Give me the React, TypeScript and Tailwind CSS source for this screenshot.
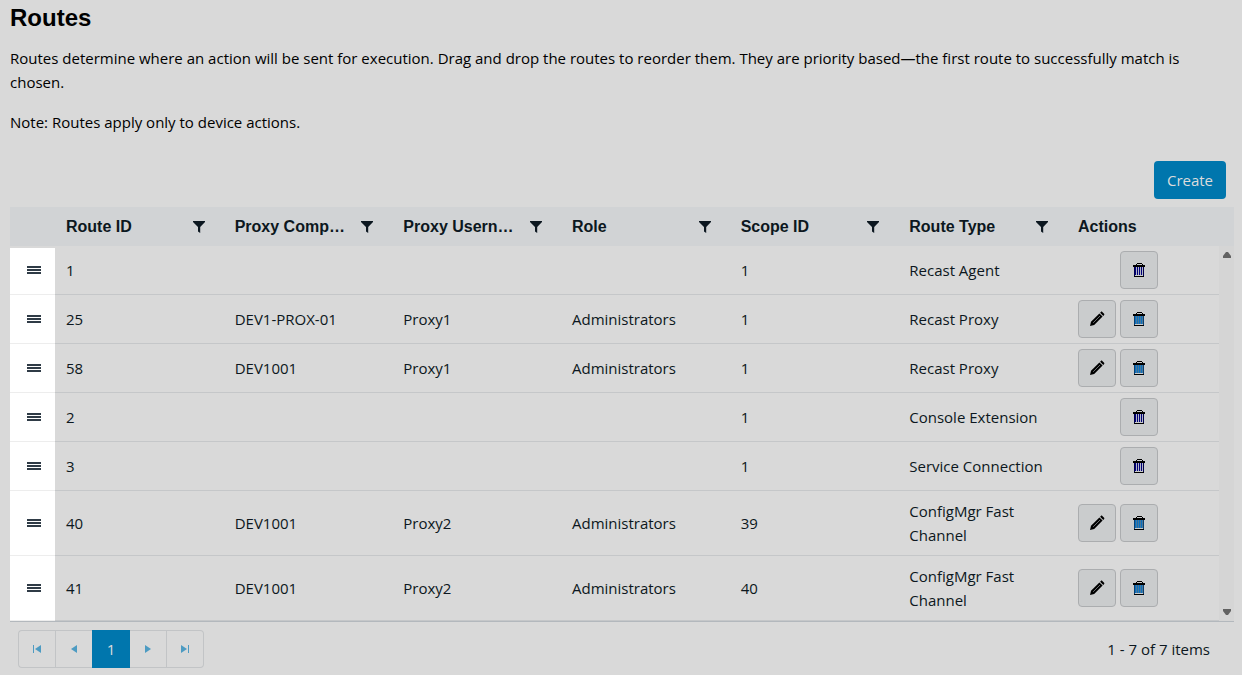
import clsx from "clsx";

type Route = {
  id: number;
  computer?: string;
  username?: string;
  role?: string;
  scope: number;
  type: string;
  editable?: boolean;
};

const ROUTES: Route[] = [
  { id: 1, scope: 1, type: "Recast Agent" },
  { id: 25, computer: "DEV1-PROX-01", username: "Proxy1", role: "Administrators", scope: 1, type: "Recast Proxy", editable: true },
  { id: 58, computer: "DEV1001", username: "Proxy1", role: "Administrators", scope: 1, type: "Recast Proxy", editable: true },
  { id: 2, scope: 1, type: "Console Extension" },
  { id: 3, scope: 1, type: "Service Connection" },
  { id: 40, computer: "DEV1001", username: "Proxy2", role: "Administrators", scope: 39, type: "ConfigMgr Fast Channel", editable: true },
  { id: 41, computer: "DEV1001", username: "Proxy2", role: "Administrators", scope: 40, type: "ConfigMgr Fast Channel", editable: true },
];

const COLUMNS = ["Route ID", "Proxy Comp…", "Proxy Usern…", "Role", "Scope ID", "Route Type"];

const FilterIcon = () => (
  <svg viewBox="0 0 12 12" className="size-3" fill="currentColor" aria-hidden="true">
    <path d="M0 0h12v1L7.2 6v6L5 10.4V6L0 1z" />
  </svg>
);

const PencilIcon = () => (
  <svg viewBox="0 0 16 16" className="size-4" aria-hidden="true">
    <path d="M1 15l1-4.2L10.4 2.4l3.2 3.2L5.2 14z" fill="#000" />
    <path d="M11.1 1.7l.8-.8c.4-.4 1-.4 1.4 0l1.8 1.8c.4.4.4 1 0 1.4l-.8.8z" fill="#000" />
    <path d="M4.2 11.8l6.8-6.8" stroke="#8a8d90" strokeWidth="0.8" />
  </svg>
);

const TrashIcon = ({ bright }: { bright?: boolean }) => (
  <svg viewBox="0 0 12 14" className="h-3.5 w-3" shapeRendering="crispEdges" aria-hidden="true">
    <path d="M4 0h5v1H4zM3 1h1v1H3zM9 1h1v1H9zM0 2h12v2H0z" fill="#000" />
    <path d="M1 4h10v10H1z" fill={bright ? "#0a3f70" : "#00004a"} />
    <path d="M2 4h8v8H2z" fill={bright ? "#0a6fc0" : "#00007a"} />
    <path d="M3 4h1v8H3zM5 4h1v8H5zM7 4h1v8H7zM9 4h1v8H9z" fill={bright ? "#4c7896" : "#b4b6c4"} />
    <path d="M2 12h8v1H2z" fill="#cacccd" />
    <path d="M1 13h10v1H1z" fill="#000" />
  </svg>
);

const ActionButton = ({ label, children }: { label: string; children: React.ReactNode }) => (
  <button
    type="button"
    aria-label={label}
    className="flex size-[38px] items-center justify-center rounded-sm border border-[#abadaf] bg-[#cacccd]"
  >
    {children}
  </button>
);

const GridColumns = () => (
  <colgroup>
    <col className="w-[45px]" />
    {COLUMNS.map((name) => (
      <col key={name} />
    ))}
    <col className="w-[152px]" />
  </colgroup>
);

const GridHeader = () => (
  <div className="bg-[#d1d3d5] pr-[15px] text-base">
    <table className="w-full table-fixed font-['Liberation_Sans',sans-serif]">
      <GridColumns />
      <thead>
        <tr className="h-[39px] text-left">
          <td />
          {COLUMNS.map((name) => (
            <th key={name} scope="col" className="px-[11px]">
              <div className="flex items-center justify-between">
                <span className="whitespace-nowrap">{name}</span>
                <button type="button" aria-label={`Filter ${name}`} className="mr-2 shrink-0">
                  <FilterIcon />
                </button>
              </div>
            </th>
          ))}
          <th scope="col" className="pl-[11px]">Actions</th>
        </tr>
      </thead>
    </table>
  </div>
);

const RouteRow = ({ route, first }: { route: Route; first: boolean }) => (
  <tr className="border-b border-[#c5c7c9]">
    <td
      className={clsx(
        "cursor-move border-b border-b-[#ededed] bg-white",
        first && "shadow-[inset_0_2px_0_#d9d9d9]",
      )}
    >
      <svg viewBox="0 0 14 8" className="ml-[17px] h-2 w-3.5" fill="#2f3b46" shapeRendering="crispEdges" aria-hidden="true">
        <path d="M0 0h14v2H0zM0 3h14v2H0zM0 6h14v2H0z" />
      </svg>
    </td>
    <td className="px-[11px]">{route.id}</td>
    <td className="px-[11px]">{route.computer}</td>
    <td className="px-[11px]">{route.username}</td>
    <td className="px-[11px]">{route.role}</td>
    <td className="px-[11px]">{route.scope}</td>
    <td className="px-[11px] py-2">{route.type}</td>
    <td className="px-[11px] py-[5px]">
      <div className="flex w-20 justify-end gap-1">
        {route.editable && (
          <ActionButton label={`Edit route ${route.id}`}>
            <PencilIcon />
          </ActionButton>
        )}
        <ActionButton label={`Delete route ${route.id}`}>
          <TrashIcon bright={route.editable} />
        </ActionButton>
      </div>
    </td>
  </tr>
);

const PAGER_PATHS = {
  first: "M0 0h1v8H0zM8 0v8L2 4z",
  prev: "M7 0v8L1 4z",
  next: "M1 0v8l6-4z",
  last: "M7 0h1v8H7zM0 0v8l6-4z",
};

const PagerButton = ({ label, icon, className }: { label: string; icon: keyof typeof PAGER_PATHS; className?: string }) => (
  <button
    type="button"
    aria-label={label}
    className={clsx("flex h-[38px] w-[37px] items-center justify-center border-y border-[#c2c4c6]", className)}
  >
    <svg viewBox="0 0 8 8" className="size-2" fill="#4d9bc2" aria-hidden="true">
      <path d={PAGER_PATHS[icon]} />
    </svg>
  </button>
);

const Pager = () => (
  <div className="flex items-center justify-between pt-2 pr-6 pl-2">
    <nav aria-label="Pages" className="flex">
      <PagerButton label="First page" icon="first" className="rounded-l-sm border-l" />
      <PagerButton label="Previous page" icon="prev" className="border-l" />
      <button type="button" aria-current="page" className="h-[38px] w-[38px] bg-[#0076ad] text-[#dcdcdc]">
        1
      </button>
      <PagerButton label="Next page" icon="next" className="border-r" />
      <PagerButton label="Last page" icon="last" className="rounded-r-sm border-r" />
    </nav>
    <span>1 - 7 of 7 items</span>
  </div>
);

export default function App() {
  return (
    <main className="min-h-screen bg-[#d9d9d9] pt-1 pr-2 pl-2.5 font-['Open_Sans',sans-serif] text-[15px] leading-6 text-[#0c1720]">
      <h1 className="font-['Liberation_Sans',sans-serif] text-2xl leading-7 font-bold text-black">Routes</h1>
      <p className="mt-3.5 text-black">
        Routes determine where an action will be sent for execution. Drag and drop the routes to reorder them. They are
        priority based—the first route to successfully match is chosen.
      </p>
      <p className="mt-4 text-black">Note: Routes apply only to device actions.</p>

      <div className="mt-[27px] mb-2 flex justify-end pr-2">
        <button type="button" className="h-[38px] w-[72px] rounded bg-[#0076ad] text-[#dcdcdc]">
          Create
        </button>
      </div>

      <section aria-label="Routes">
        <GridHeader />
        <div className="flex border-b border-[#b3b8bd]">
          <div className="min-w-0 flex-1">
            <table className="w-full table-fixed">
              <GridColumns />
              <tbody>
                {ROUTES.map((route, i) => (
                  <RouteRow key={route.id} route={route} first={i === 0} />
                ))}
              </tbody>
            </table>
          </div>
          {/* scrollbar track */}
          <div className="flex w-[15px] shrink-0 flex-col items-center justify-between bg-[#d5d5d5] py-1.5" aria-hidden="true">
            <svg viewBox="0 0 8 6" className="h-1.5 w-2" fill="#626262">
              <path d="M3 0h2l3 4v2H0V4z" />
            </svg>
            <svg viewBox="0 0 8 6" className="h-1.5 w-2" fill="#626262">
              <path d="M3 6h2l3-4V0H0v2z" />
            </svg>
          </div>
        </div>
        <Pager />
      </section>
    </main>
  );
}
